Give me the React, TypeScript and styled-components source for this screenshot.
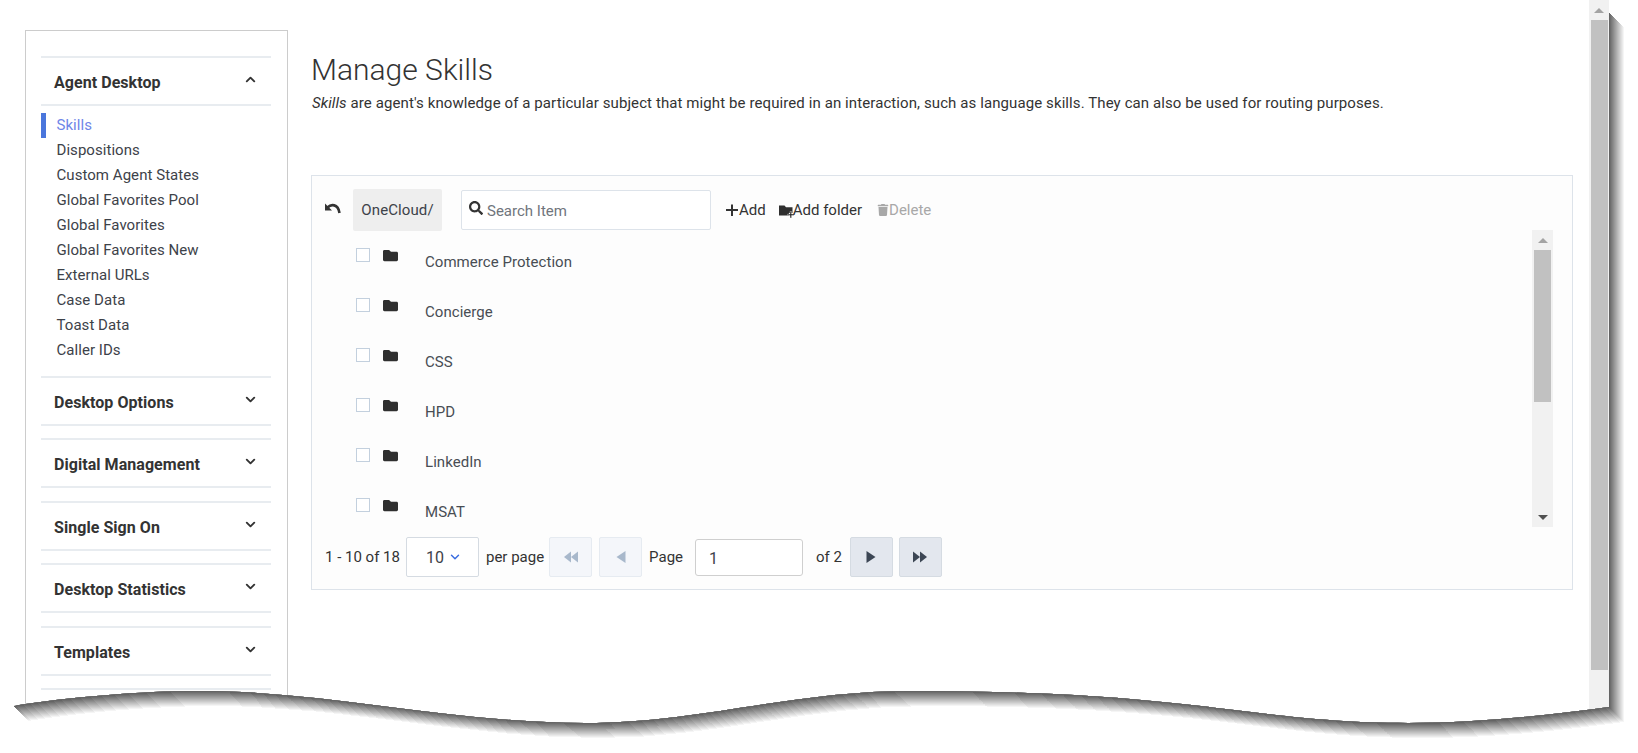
import React from 'react';
import styled, { createGlobalStyle } from 'styled-components';
import { ChevronDown, ChevronUp } from 'lucide-react';
import { FaFolder, FaSearch, FaTrash } from 'react-icons/fa';

const GlobalStyle = createGlobalStyle`
  html, body { margin: 0; padding: 0; background: #fff; overflow: hidden; }
  body { font-family: Roboto, "Liberation Sans", sans-serif; color: #333; }
`;

const Screen = styled.div`
  position: relative;
  width: 1638px;
  height: 753px;
  overflow: hidden;
  background: #fff;
`;

const Page = styled.div`
  display: flex;
  width: 1609px;
  height: 753px;
`;

const Content = styled.div`
  flex: 1;
  display: flex;
  align-items: flex-start;
  padding: 30px 16px 0 25px;
  min-width: 0;
`;

const Sidebar = styled.aside`
  flex: none;
  box-sizing: border-box;
  width: 263px;
  height: 760px;
  border: 1px solid #ccc;
  padding: 25px 16px 0 15px;
`;

const Section = styled.section`
  margin-bottom: 12.5px;
`;

const SectionHead = styled.div`
  box-sizing: border-box;
  height: 50px;
  border-top: 2px solid #e8ecf0;
  border-bottom: 2px solid #e8ecf0;
  display: flex;
  align-items: center;
  justify-content: space-between;
  padding: 3px 13px 0 13px;
  font-size: 16px;
  font-weight: 700;
  letter-spacing: 0.05px;
  color: #333;
  svg { margin-top: -6px; }
`;

const NavList = styled.ul`
  list-style: none;
  margin: 7px 0 10px;
  padding: 0;
`;

const NavItem = styled.li<{ $active?: boolean }>`
  height: 25px;
  line-height: 25px;
  font-size: 15px;
  letter-spacing: 0.05px;
  padding-left: 10.5px;
  border-left: 5px solid ${p => (p.$active ? '#4a76dc' : 'transparent')};
  color: ${p => (p.$active ? '#6f86e8' : '#3d4249')};
`;

const Main = styled.main`
  flex: 1;
  min-width: 0;
  padding: 22px 0 0 23px;
`;

const Title = styled.h1`
  margin: 0 0 5px;
  font-size: 30px;
  line-height: 36px;
  font-weight: 300;
  color: #333;
`;

const Lead = styled.p`
  margin: 0 0 62px 1px;
  font-size: 15px;
  line-height: 20px;
  letter-spacing: 0.095px;
  color: #333;
`;

const Panel = styled.div`
  box-sizing: border-box;
  height: 415px;
  border: 1px solid #dde3ea;
  background: #fdfdfd;
  padding: 13px 19px 0 13px;
`;

const Toolbar = styled.div`
  display: flex;
  align-items: center;
  height: 42px;
  font-size: 15px;
`;

const BackIcon = styled.svg`
  flex: none;
  width: 16px;
  height: 12px;
  margin: -4px 12px 0 0;
  color: #333;
`;

const Crumb = styled.div`
  box-sizing: border-box;
  width: 89px;
  height: 42px;
  line-height: 43px;
  text-align: center;
  letter-spacing: 0.1px;
  background: #eee;
  border-radius: 2px;
  color: #3d4249;
`;

const SearchBox = styled.div`
  box-sizing: border-box;
  width: 250px;
  height: 40px;
  margin: 0 14px 0 19px;
  padding: 2px 7px 0;
  display: flex;
  align-items: center;
  gap: 4px;
  border: 1px solid #dde3ea;
  border-radius: 2px;
  background: #fff;
  color: #70757c;
  svg { width: 14px; height: 14px; color: #333; margin-top: -7px; }
`;

const ToolAction = styled.span<{ $disabled?: boolean; $gap?: number }>`
  display: inline-flex;
  align-items: center;
  margin-right: ${p => p.$gap ?? 13}px;
  color: ${p => (p.$disabled ? '#a8a8a8' : '#333')};
`;

const ListArea = styled.div`
  display: flex;
  justify-content: space-between;
  height: 297px;
  margin-top: -1px;
  overflow: hidden;
`;

const Rows = styled.div`
  padding-top: 7px;
`;

const Row = styled.div`
  display: flex;
  align-items: flex-start;
  box-sizing: border-box;
  height: 50px;
  padding: 11px 0 0 31px;
`;

const Check = styled.span`
  flex: none;
  box-sizing: border-box;
  width: 14px;
  height: 14px;
  border: 1px solid #c3d0de;
  background: #fff;
`;

const RowFolder = styled(FaFolder)`
  flex: none;
  width: 15px;
  height: 15px;
  margin: 0 27px 0 13px;
  color: #2f2f2f;
`;

const RowLabel = styled.span`
  margin-top: 1px;
  font-size: 15px;
  line-height: 26px;
  letter-spacing: 0.05px;
  color: #484d54;
`;

const ScrollTrack = styled.div`
  flex: none;
  position: relative;
  background: #f1f1f1;
  display: flex;
  flex-direction: column;
  align-items: center;
`;

const InnerTrack = styled(ScrollTrack)`
  width: 21px;
  height: 100%;
`;

const PageTrack = styled(ScrollTrack)`
  width: 20px;
  height: 100%;
`;

const ArrowCell = styled.div`
  flex: none;
  height: 20px;
  display: flex;
  align-items: center;
  justify-content: center;
`;

const Thumb = styled.div<{ $height: number }>`
  flex: none;
  width: 17px;
  height: ${p => p.$height}px;
  background: #c1c1c1;
`;

const Filler = styled.div`
  flex: 1;
`;

const Arrow = styled.span<{ $down?: boolean }>`
  width: 0;
  height: 0;
  border-left: 5px solid transparent;
  border-right: 5px solid transparent;
  ${p => (p.$down ? 'border-top: 5px solid #505050;' : 'border-bottom: 5px solid #a3a3a3;')}
`;

const Pager = styled.div`
  display: flex;
  align-items: center;
  height: 40px;
  margin-top: 10px;
  font-size: 15px;
  color: #333;
`;

const PagerText = styled.span<{ $left: number; $right: number }>`
  margin: 0 ${p => p.$right}px 0 ${p => p.$left}px;
  white-space: nowrap;
`;

const PerPage = styled.div`
  box-sizing: border-box;
  width: 73px;
  height: 40px;
  padding-left: 3px;
  border: 1px solid #d5dbe2;
  border-radius: 2px;
  background: #fff;
  display: flex;
  align-items: center;
  justify-content: center;
  gap: 4px;
  font-size: 16px;
  color: #3d4249;
  svg { color: #3a6de0; }
`;

const PageButton = styled.div<{ $enabled?: boolean }>`
  box-sizing: border-box;
  width: 43px;
  height: 40px;
  margin-right: ${p => (p.$enabled ? 6 : 7)}px;
  border: 1px solid ${p => (p.$enabled ? '#d5dbe2' : '#e6ebf1')};
  border-radius: 2px;
  background: ${p => (p.$enabled ? '#e3e7ee' : '#f4f6fa')};
  display: flex;
  align-items: center;
  justify-content: center;
  color: ${p => (p.$enabled ? '#3c4654' : '#a8b8cb')};
`;

const PageInput = styled.div`
  box-sizing: border-box;
  width: 108px;
  height: 37px;
  padding-left: 13px;
  line-height: 37px;
  border: 1px solid #cfcfcf;
  border-radius: 3px;
  background: #fff;
  font-size: 16px;
  color: #3d4249;
`;

const TearOverlay = styled.svg`
  position: absolute;
  left: 0;
  top: 0;
  pointer-events: none;
`;

const TriangleIcon: React.FC<{ dir: 'left' | 'right'; double?: boolean }> = ({ dir, double }) => (
  <svg width="16" height="14" viewBox="0 0 16 14" fill="currentColor">
    <g transform={dir === 'left' ? 'translate(16 0) scale(-1 1)' : undefined}>
      {double ? (
        <>
          <path d="M1 1.5 8 7l-7 5.5z" />
          <path d="M8 1.5 15 7l-7 5.5z" />
        </>
      ) : (
        <path d="M3.5 1 12.5 7l-9 6z" />
      )}
    </g>
  </svg>
);

const UndoGlyph = () => (
  <BackIcon viewBox="0 0 16 12">
    <path d="M0 1.500V8.500H7z" fill="currentColor" />
    <path d="M2.500 5.500C6 2 13 1.500 14.500 11" fill="none" stroke="currentColor" strokeWidth="2.6" />
  </BackIcon>
);

const AddFolderIcon = () => (
  <svg width="16" height="15" viewBox="0 0 16 15" fill="#2f2f2f" style={{ marginRight: -2 }}>
    <path d="M0 2.500h5.500L7 4.200h6.500V10H10v2.500H0z" />
    <path d="M11 8.500h1.600V11H15v1.500h-2.400V15H11v-2.500H8.700V11H11z" stroke="#fff" strokeWidth="0.4" />
  </svg>
);

const PlusIcon = () => (
  <svg width="14" height="14" viewBox="0 0 14 14" fill="#333">
    <path d="M6 1.500h2V6h5v2H8v5H6V8H1V6h5z" />
  </svg>
);

// bottom of the page is torn off along this curve
const REVERSED_WAVE =
  'C 1550 715, 1480 723, 1408 723 C 1250 723, 1200 691, 912 691 C 790 691, 700 723, 585 723 C 450 723, 330 691, 200 691 C 140 691, 70 697, 13 706';
const tornPage = (top: number) => `M13 ${top} H1609 V707 ${REVERSED_WAVE} Z`;

const SHADOW_STEPS = Array.from({ length: 16 }, (_, i) => 16 - i);

const TornEdge = () => (
  <TearOverlay width="1638" height="753" viewBox="0 0 1638 753">
    <defs>
      <clipPath id="outside-page">
        <path clipRule="evenodd" d={`M0 0 H1638 V753 H0 Z ${tornPage(-2)}`} />
      </clipPath>
    </defs>
    <g clipPath="url(#outside-page)" shapeRendering="crispEdges">
      <rect width="1638" height="753" fill="#fff" />
      {SHADOW_STEPS.map(i => {
        const v = Math.round(100 + (155 * (i - 1)) / 15);
        return (
          <path
            key={i}
            d={tornPage(12)}
            fill={`rgb(${v},${v},${v})`}
            transform={`translate(${i} ${i})`}
          />
        );
      })}
    </g>
  </TearOverlay>
);

const NAV_ITEMS = [
  'Skills',
  'Dispositions',
  'Custom Agent States',
  'Global Favorites Pool',
  'Global Favorites',
  'Global Favorites New',
  'External URLs',
  'Case Data',
  'Toast Data',
  'Caller IDs',
];

const CLOSED_SECTIONS = [
  'Desktop Options',
  'Digital Management',
  'Single Sign On',
  'Desktop Statistics',
  'Templates',
];

const FOLDERS = ['Commerce Protection', 'Concierge', 'CSS', 'HPD', 'LinkedIn', 'MSAT'];

export default function App() {
  return (
    <Screen>
      <GlobalStyle />
      <Page>
        <Content>
          <Sidebar>
            <Section>
              <SectionHead>
                Agent Desktop
                <ChevronUp size={15} strokeWidth={3} />
              </SectionHead>
              <NavList>
                {NAV_ITEMS.map((item, index) => (
                  <NavItem key={item} $active={index === 0}>
                    {item}
                  </NavItem>
                ))}
              </NavList>
            </Section>
            {CLOSED_SECTIONS.map(name => (
              <Section key={name}>
                <SectionHead>
                  {name}
                  <ChevronDown size={15} strokeWidth={3} />
                </SectionHead>
              </Section>
            ))}
            <Section>
              <SectionHead />
            </Section>
          </Sidebar>
          <Main>
            <Title>Manage Skills</Title>
            <Lead>
              <em>Skills</em> are agent's knowledge of a particular subject that might be required in
              an interaction, such as language skills. They can also be used for routing purposes.
            </Lead>
            <Panel>
              <Toolbar>
                <UndoGlyph />
                <Crumb>OneCloud/</Crumb>
                <SearchBox>
                  <FaSearch />
                  Search Item
                </SearchBox>
                <ToolAction>
                  <PlusIcon />
                  Add
                </ToolAction>
                <ToolAction $gap={15}>
                  <AddFolderIcon />
                  Add folder
                </ToolAction>
                <ToolAction $disabled>
                  <FaTrash size={12} />
                  Delete
                </ToolAction>
              </Toolbar>
              <ListArea>
                <Rows>
                  {FOLDERS.map(name => (
                    <Row key={name}>
                      <Check />
                      <RowFolder />
                      <RowLabel>{name}</RowLabel>
                    </Row>
                  ))}
                </Rows>
                <InnerTrack>
                  <ArrowCell>
                    <Arrow />
                  </ArrowCell>
                  <Thumb $height={152} />
                  <Filler />
                  <ArrowCell>
                    <Arrow $down />
                  </ArrowCell>
                </InnerTrack>
              </ListArea>
              <Pager>
                <PagerText $left={0} $right={6}>
                  1 - 10 of 18
                </PagerText>
                <PerPage>
                  10
                  <ChevronDown size={14} strokeWidth={2.5} />
                </PerPage>
                <PagerText $left={7} $right={5}>
                  per page
                </PagerText>
                <PageButton>
                  <TriangleIcon dir="left" double />
                </PageButton>
                <PageButton>
                  <TriangleIcon dir="left" />
                </PageButton>
                <PagerText $left={0} $right={12}>
                  Page
                </PagerText>
                <PageInput>1</PageInput>
                <PagerText $left={13} $right={8}>
                  of 2
                </PagerText>
                <PageButton $enabled>
                  <TriangleIcon dir="right" />
                </PageButton>
                <PageButton $enabled>
                  <TriangleIcon dir="right" double />
                </PageButton>
              </Pager>
            </Panel>
          </Main>
        </Content>
        <PageTrack>
          <ArrowCell>
            <Arrow />
          </ArrowCell>
          <Thumb $height={650} />
          <Filler />
        </PageTrack>
      </Page>
      <TornEdge />
    </Screen>
  );
}
